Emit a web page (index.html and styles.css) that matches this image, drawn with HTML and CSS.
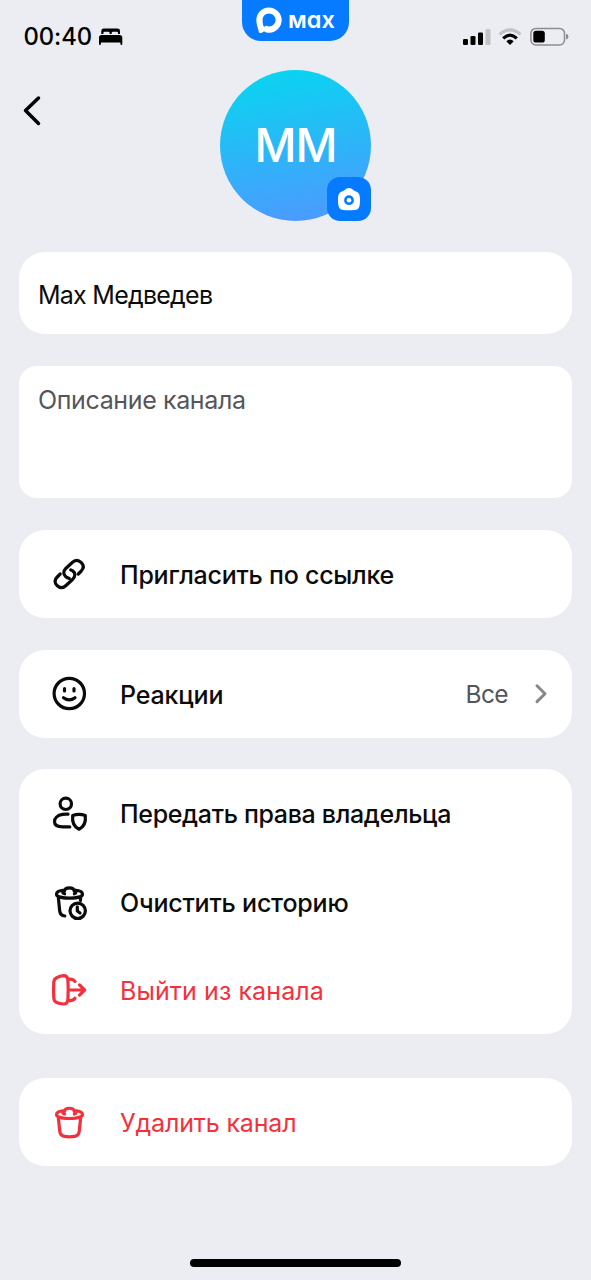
FILE: index.html
```html
<!DOCTYPE html>
<html lang="ru">
<head>
<meta charset="utf-8">
<title>Max Медведев</title>
<link rel="stylesheet" href="styles.css">
</head>
<body>
<div class="screen">
  <div class="status">
    <div class="clock"><span class="time">00:40</span>
      <svg class="bed" width="26" height="18" viewBox="0 0 26 18"><path d="M3.3 6V3Q3.3.6 5.8.6H19.5Q22 .6 22 3V6H20V5Q20 3.8 18.8 3.8H15Q13.7 3.8 13.7 5V6H11.6V5Q11.6 3.8 10.4 3.8H6.6Q5.4 3.8 5.4 5V6ZM1 9.6Q1 6.9 3.7 6.9H21.6Q24.3 6.9 24.3 9.6V16Q24.3 17 23.4 17T22.4 16V14.6H2.9V16Q2.9 17 2 17T1 16Z"/></svg>
    </div>
    <div class="brand">
      <svg width="28" height="28" viewBox="0 0 28 28"><path fill="#fff" fill-rule="evenodd" d="M13.800 1.500C20.900 1.500 26.700 7.100 26.700 14.100S21 26.800 14.400 26.800C11.900 26.800 10.400 26.200 9 25.200C7.700 26.600 5.700 27.300 4 26.800C3.600 23.200 1.300 19.400 1.300 14C1.300 7.100 6.800 1.500 13.800 1.500ZM14 7.600C10.300 7.600 7.600 10.400 7.600 14C7.600 16.900 8.200 20.400 9.200 20.700C9.700 20.800 10.500 20 11.100 19.500C12 20.100 12.900 20.500 14.100 20.500C17.700 20.500 20.600 17.700 20.600 14.100S17.600 7.600 14 7.600Z"/></svg>
      <span class="brand-name">мax</span>
    </div>
    <div class="signals">
      <svg width="28" height="18" viewBox="0 0 28 18"><rect x="0" y="11" width="5" height="6" rx="1.3"/><rect x="7.500" y="8" width="5" height="9" rx="1.3"/><rect x="15" y="4.500" width="5" height="12.500" rx="1.3"/><rect x="22.500" y="1" width="5" height="16" rx="1.3" fill="#c2c2c5"/></svg>
      <svg width="24" height="18" viewBox="0 0 24 18"><path d="M1.500 6.500Q12-2.800 22.500 6.500" fill="none" stroke="#c2c2c5" stroke-width="3"/><path d="M5.200 10.300Q12 4 18.800 10.300" fill="none" stroke="#000" stroke-width="3.200"/><path d="M8.300 13.200Q12 10 15.700 13.200L12 17Z"/></svg>
      <svg width="40" height="20" viewBox="0 0 40 20"><rect x=".9" y="1.400" width="33.600" height="16.600" rx="5" fill="none" stroke="#8d8d91" stroke-width="1.500"/><rect x="3.300" y="3.800" width="11.500" height="11.800" rx="2.700"/><path d="M36 6.800Q38.500 7.500 38.500 9.700T36 12.600Z" fill="#8d8d91"/></svg>
    </div>
  </div>

  <div class="header">
    <svg class="back" width="20" height="32" viewBox="0 0 20 32"><path d="M16.500 3L3.500 15.500L16.500 28.500"/></svg>
    <div class="avatar"><span>MM</span>
      <div class="camera"><svg width="24" height="24" viewBox="0 0 24 24"><path fill="#fff" fill-rule="evenodd" d="M8.200 2.500Q9.500 1 12 1T15.800 2.500C16.800 3.700 17.500 3.700 19 4.500C22 5.500 23 8 23 12.500C23 19 22.500 22.700 17.500 23Q12 23.500 6.500 23C1.500 22.700 1 19 1 12.500C1 8 2 5.500 5 4.500C6.500 3.700 7.200 3.700 8.200 2.500ZM12 8.300A4.900 4.900 0 1 0 12 18.100A4.900 4.900 0 1 0 12 8.300Z"/><circle cx="12" cy="13.200" r="2.300" fill="#fff"/></svg></div>
    </div>
  </div>

  <div class="cards">
    <div class="card name"><span class="t-name">Max Медведев</span></div>
    <div class="card about"><span class="t-about">Описание канала</span></div>
    <div class="card"><div class="row">
      <svg class="icon" viewBox="0 0 40 40"><path d="M29.300 20L32.300 17Q36.300 12.700 32.300 8.700Q27.800 4 23 8.700L17 14.200Q12.600 19 16.800 22.700Q18.300 24 20.200 24.300M11.200 20L8.200 23Q4 27.300 8 31.500Q12.500 35.800 17 31.500L23.500 25.500Q28.200 20.300 23.700 16.900L21.700 15.900"/></svg>
      <span class="label t-invite">Пригласить по ссылке</span></div></div>
    <div class="card"><div class="row">
      <svg class="icon" viewBox="0 0 40 40"><circle cx="20.300" cy="19.500" r="15.200"/><path d="M15.500 14.700V17M25 14.700V17M14.500 23.700Q20.300 28 26 23.700"/></svg>
      <span class="label t-react">Реакции</span><span class="value">Все</span>
      <svg class="chevron" width="16" height="24" viewBox="0 0 16 24"><path d="M4 3.800L12 11.700L4 19.600"/></svg></div></div>
    <div class="card"><div class="row">
      <svg class="icon" viewBox="0 0 40 40"><circle cx="16.800" cy="10.800" r="5.700"/><path d="M19 21.200Q16.500 20.900 13.500 21.400C8.200 22.200 5.500 25.500 5.500 28.500C5.500 32 9 33.900 14 33.900H20.800M23.700 22.400Q30 20.300 36.300 22.400C37 29.200 35.500 33.700 30 36.200C24.500 33.700 23 29.200 23.700 22.400Z"/></svg>
      <span class="label t-owner">Передать права владельца</span></div>
      <div class="row">
      <svg class="icon" viewBox="0 0 40 40"><path d="M15.600 11.800C12.800 11.200 14 9.500 15.500 9.100C15.700 4.900 25 4.900 25.200 9.100C27.500 9.600 27.300 11.300 25.400 11.800M15.200 8.200C10.500 8.600 7.500 9.900 7.500 12.200C7.500 17.400 33.500 17.400 33.500 12.200C33.500 9.900 30.500 8.600 25.800 8.200M9.300 15L10.700 29Q11.200 33.300 15.800 34M31.700 15L31.400 18.500"/><circle cx="28.700" cy="28.800" r="7.700"/><path d="M28.300 24.800V29L31 31"/></svg>
      <span class="label t-clear">Очистить историю</span></div>
      <div class="row danger">
      <svg class="icon" viewBox="0 0 40 40"><path d="M8.200 7.500Q10.500 5.800 14.500 5.600Q18.500 5.600 18.900 10Q19.500 20 18.900 29.500Q18.500 34.200 14.500 34Q10.500 33.700 7.700 32.500Q5 31.500 4.800 28Q4.300 20 4.800 12Q5 8.800 8.200 7.500ZM20 9.300Q24 8.800 26 11.400M20 30.500Q24 31 26 28.300M20 20H35.500M30.500 14.900L35.600 20L30.500 25.100"/></svg>
      <span class="label t-leave">Выйти из канала</span></div></div>
    <div class="card last"><div class="row danger">
      <svg class="icon" viewBox="0 0 40 40"><path d="M15.600 12C12.800 11.400 14 9.700 15.500 9.300C15.700 5.200 25 5.200 25.200 9.300C27.500 9.800 27.300 11.500 25.400 12M15.200 8.600C10.500 9 7.500 10.300 7.500 12.600C7.500 17.800 33.500 17.800 33.500 12.600C33.500 10.300 30.500 9 25.800 8.600M9.300 15.500L10.800 29.500Q11.300 33.700 15.500 34.400Q20.500 35.200 25.500 34.400Q29.700 33.700 30.200 29.500L31.700 15.500"/></svg>
      <span class="label t-delete">Удалить канал</span></div></div>
  </div>
  <div class="home"></div>
</div>
</body>
</html>
```

FILE: styles.css
```css
* { box-sizing: border-box; }
body { margin: 0; background: #ecedf2; font-family: Inter, "Liberation Sans", sans-serif; color: #0b0b0c; }
svg { display: block; flex: none; }
.screen { width: 591px; height: 1280px; display: flex; flex-direction: column; background: #ecedf2; overflow: hidden; }
.status { height: 69.500px; display: grid; grid-template-columns: 242px 107px 242px; align-items: start; }
.clock { display: flex; align-items: center; padding: 22px 0 0 23.500px; }
.time { width: 74px; font-size: 23.800px; line-height: 29px; font-weight: 500; letter-spacing: -.1px; color: #000; white-space: nowrap; }
.brand { height: 41px; background: #077bff; border-radius: 0 0 19px 19px; display: flex; align-items: center; padding: 0 0 1px 13px; }
.brand-name { margin-left: 5px; color: #fff; font-size: 23.500px; line-height: 26px; font-weight: 600; font-feature-settings: "cv11"; }
.signals { display: flex; align-items: center; padding: 27px 0 0 114px; }
.signals svg:nth-child(2) { margin-left: 7px; }
.signals svg:nth-child(3) { margin-left: 8px; }
.header { height: 182.500px; display: grid; grid-template-columns: 220px 151px; }
.back { margin: 25px 0 0 22px; fill: none; stroke: #000; stroke-width: 3.500; stroke-linecap: round; stroke-linejoin: round; }
.avatar { position: relative; width: 151px; height: 151px; border-radius: 50%; background: linear-gradient(170deg, #08d5f0 4%, #4d99ff 96%); display: flex; align-items: center; justify-content: center; color: #fff; font-size: 46px; font-weight: 500; letter-spacing: -.9px; }
.camera { position: absolute; right: 0; bottom: 0; width: 44px; height: 44px; border-radius: 13px; background: #077bff; display: flex; align-items: center; justify-content: center; }
.cards { display: flex; flex-direction: column; padding: 0 19px; gap: 31.700px; }
.card { background: #fff; border-radius: 26px; }
.name { height: 82px; padding: 27px 19px 0; }
.about { height: 132.500px; padding: 18px 19px; border-radius: 18px; color: #55565a; }
.t-name, .t-about, .label, .value { font-size: 25px; line-height: 32px; white-space: nowrap; }
.t-name { letter-spacing: -.75px; }
.t-about { letter-spacing: -.37px; }
.row { height: 88.100px; display: flex; align-items: center; padding: 0 23px 0 30px; }
.icon { width: 40px; height: 40px; fill: none; stroke: currentColor; stroke-width: 3.200; stroke-linecap: round; stroke-linejoin: round; }
.label { margin-left: 31px; padding-top: 2px; font-weight: 500; }
.t-invite { letter-spacing: -.24px; }
.t-react { letter-spacing: -.15px; }
.t-owner { letter-spacing: -.33px; padding-top: 1px; }
.t-clear { letter-spacing: -.2px; }
.t-leave { letter-spacing: .1px; }
.t-delete { letter-spacing: -.15px; }
.danger { color: #f5303d; }
.danger .label { font-weight: 400; }
.value { margin-left: auto; color: #55565a; font-size: 24.500px; letter-spacing: -.6px; }
.chevron { margin-left: 25px; fill: none; stroke: #87888b; stroke-width: 3; stroke-linecap: round; stroke-linejoin: round; }
.last { margin-top: 12.500px; }
.home { width: 211px; height: 8px; border-radius: 4px; background: #000; margin: auto auto 13px 190px; }
```
